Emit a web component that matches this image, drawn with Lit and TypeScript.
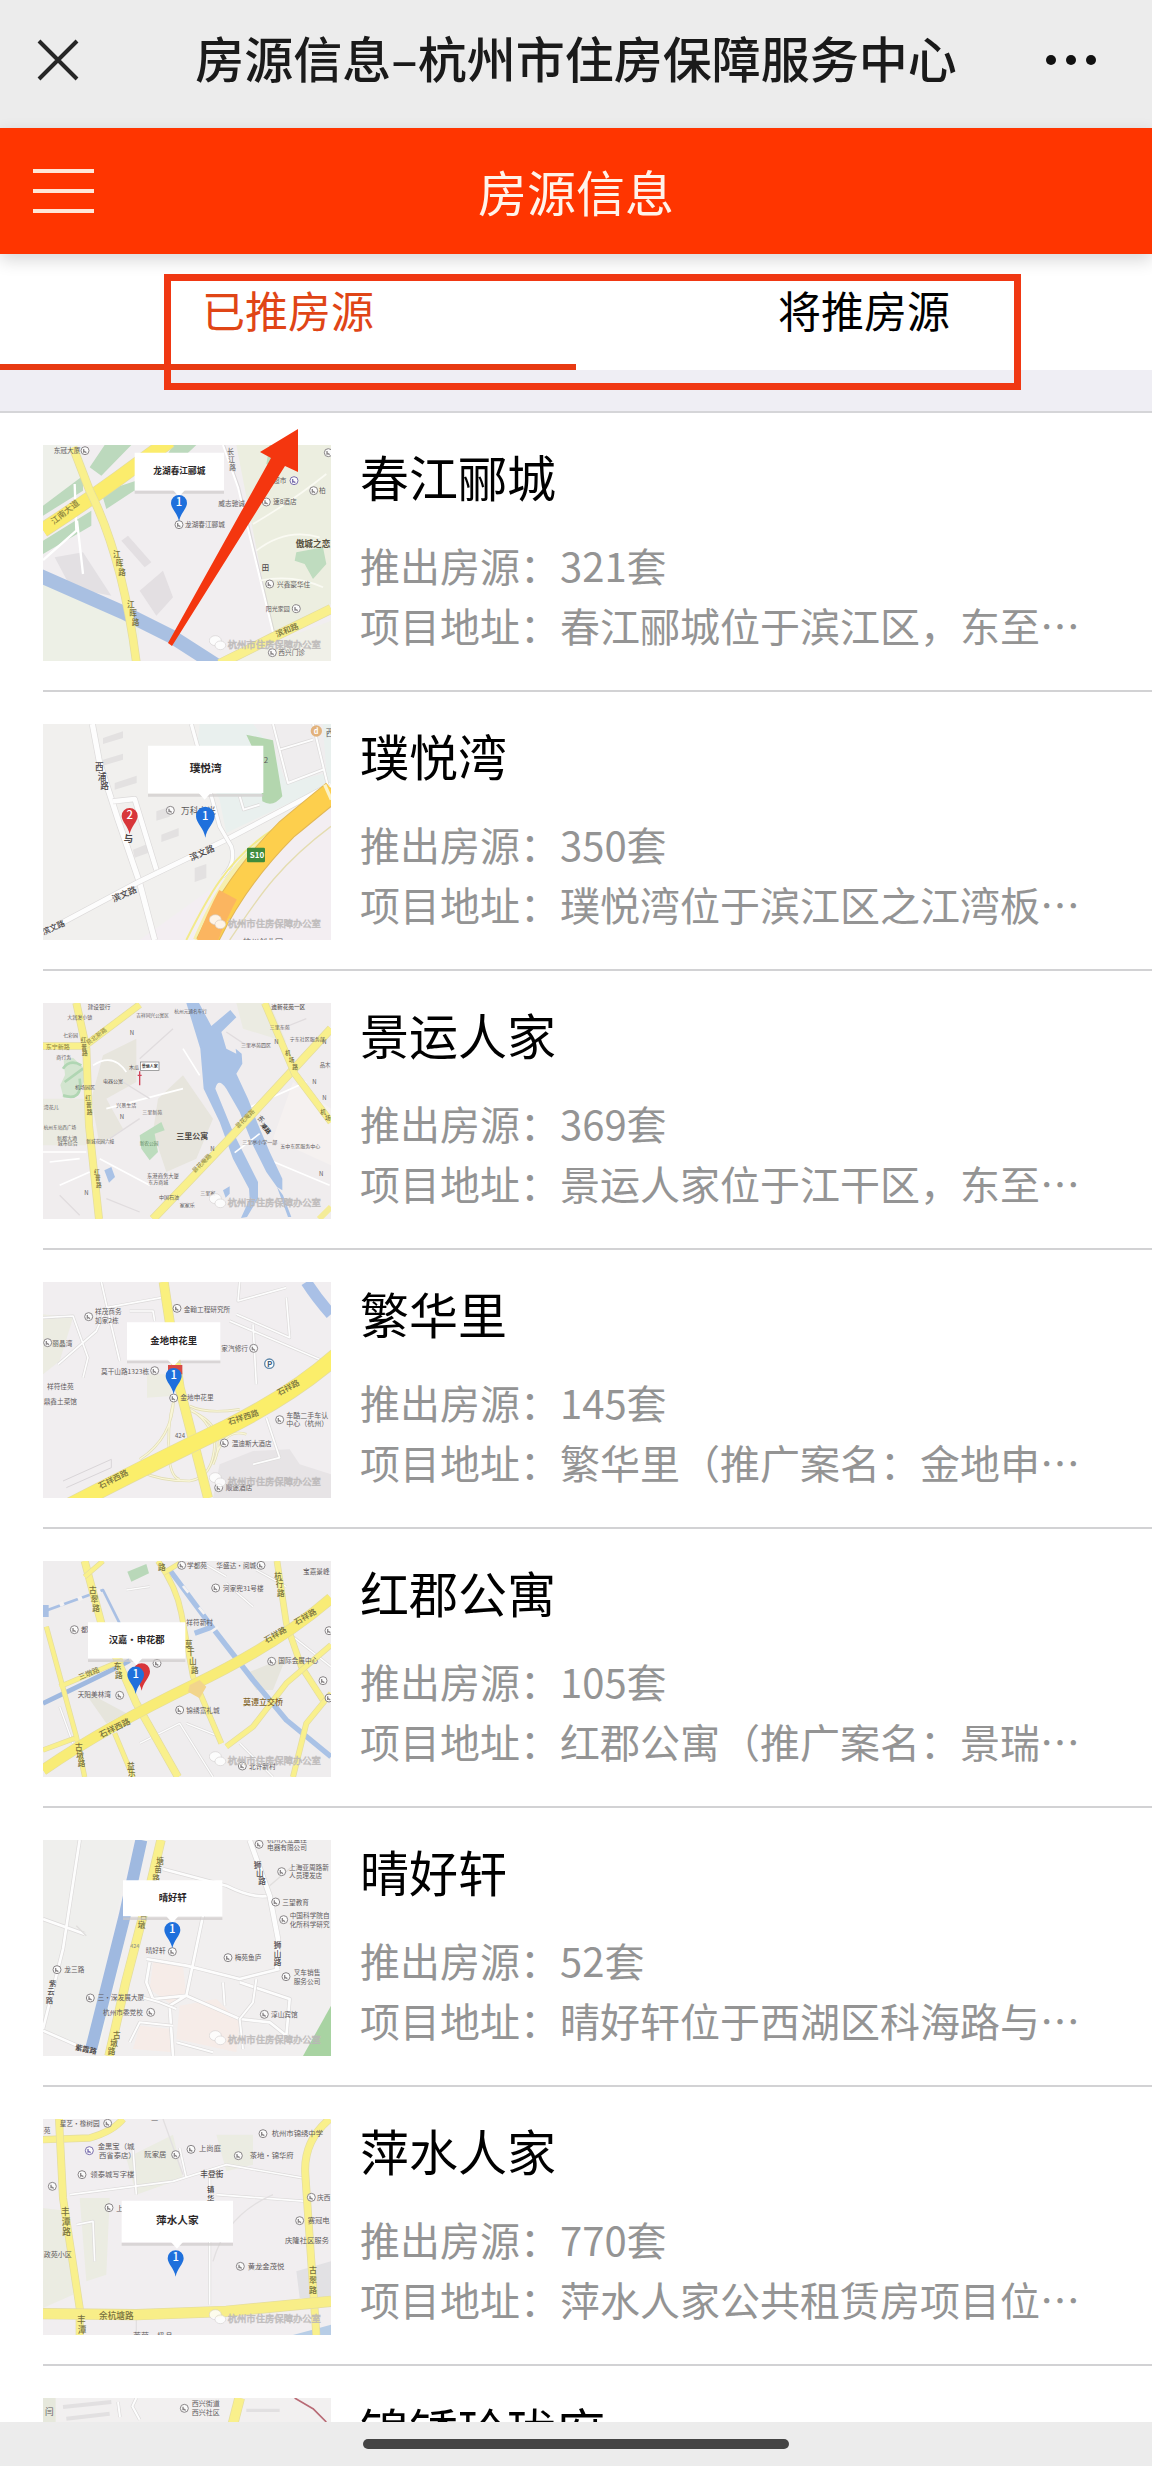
import { LitElement, html, css, svg } from "lit";
import { customElement, property, state } from "lit/decorators.js";
import { classMap } from "lit/directives/class-map.js";

/* ---------- map drawing helpers (map canvas is 864 x 648 units) ---------- */

const line = (d: string, width: number, color: string) =>
  svg`<path d=${d} fill="none" stroke=${color} stroke-width=${width} stroke-linejoin="round"/>`;

const area = (d: string, color: string) => svg`<path d=${d} fill=${color}/>`;

/** Main road: yellow with a darker edge. */
const road = (d: string, width = 26, color = "#f9f08c") =>
  svg`${line(d, width + 4, "#e3dca0")}${line(d, width, color)}`;

/** Side street: white with a grey edge. */
const street = (d: string, width = 8) =>
  svg`${line(d, width + 4, "#dcdada")}${line(d, width, "#fdfdfd")}`;

const label = (x: number, y: number, text: string, size = 23, turn = 0, color = "#5f5b5d", weight = 400) =>
  svg`<text x=${x} y=${y} font-size=${size} fill=${color} font-weight=${weight}
    transform=${`rotate(${turn} ${x} ${y})`}>${text}</text>`;

/** Point of interest: small ringed dot. */
const poi = (x: number, y: number, color = "#8a8688") =>
  svg`<circle cx=${x} cy=${y} r="12" fill="#fbfbfb" stroke=${color} stroke-width="3"/>
    <path d=${`M${x - 4} ${y + 6}V${y - 5}M${x - 4} ${y + 1}l8 5`} fill="none" stroke=${color} stroke-width="4"/>`;

/** Name written down a road, one character per step. */
const along = (x: number, y: number, text: string, dx: number, dy: number, size = 23, color = "#77713f") =>
  [...text].map((c, i) => label(x + dx * i, y + dy * i, c, size, 0, color, 500));

const callout = (x: number, y: number, w: number, h: number, tip: number, text: string, size = 31) => svg`
  <path d=${`M${x} ${y + h + 3}h${w}v8h-${w}z`} fill="#cfcbcb" opacity="0.7"/>
  <path d=${`M${x} ${y}h${w}v${h}H${tip + 18}L${tip} ${y + h + 20}L${tip - 18} ${y + h}H${x}z`} fill="#fff"/>
  <text x=${x + w / 2} y=${y + h / 2 + 8} text-anchor="middle" font-size=${size} font-weight="700" fill="#2b2728">${text}</text>`;

const pin = (x: number, y: number, n: string, color = "#1f70dc", r = 24) => svg`
  <path d=${`M${x} ${y}C${x - 4} ${y - r} ${x - r} ${y - r * 1.6} ${x - r} ${y - r * 2.3}a${r} ${r} 0 0 1 ${r * 2} 0C${x + r} ${y - r * 1.6} ${x + 4} ${y - r} ${x} ${y}z`} fill=${color}/>
  <text x=${x} y=${y - r * 1.9} text-anchor="middle" font-size="34" font-weight="500" fill="#fff">${n}</text>`;

const watermark = () => svg`
  <g opacity="0.85">
    <ellipse cx="527" cy="600" rx="18" ry="15" fill="#fff" stroke="#d2cfcf" stroke-width="2"/>
    <ellipse cx="542" cy="614" rx="16" ry="13" fill="#fff" stroke="#d2cfcf" stroke-width="2"/>
    <text x="564" y="621" font-size="28" fill="#fff" stroke="#b9b6b6" stroke-width="2">杭州市住房保障办公室</text>
  </g>`;

const maps: Record<string, unknown> = {
  chunjiang: svg`
    ${area("M10 13H874V661H10z", "#f1eef0")}
    ${area("M10 13H115L150 110L10 220z", "#eef0ea")}
    ${area("M590 13H874V490L700 580z", "#eceee0")}
    ${area("M10 430L300 560L290 661H10z", "#edf0e6")}
    ${area("M560 661L874 540V661z", "#f0f0e8")}
    ${area("M195 13H275L185 105L150 80zM350 100L400 13H470L420 60L200 205L185 155z", "#bcd9bd")}
    ${area("M10 195L130 105V150L10 225zM10 300L155 210V255L10 340z", "#bcd9bd")}
    ${area("M690 13H720V85L680 70zM770 335L850 320L860 370L820 415L795 370L765 360z", "#bfdcbf")}
    ${area("M45 350L130 335L215 465L160 455L85 425z", "#e3e0e3")}
    ${area("M245 300l20-15l70 80l-20 15zM300 450l70-60l30 80l-50 55z", "#e3dfe2")}
    ${line("M10 358L110 270L105 130M112 240L130 400", 7, "#fff")}
    ${line("M550 13L595 140L700 575", 6, "#fff")}
    ${line("M555 13L600 140L705 575", 2, "#cfcbcd")}
    ${line("M640 250Q760 180 860 100M650 330Q740 260 840 290M660 420Q760 400 850 440", 5, "#fafaf3")}
    ${line("M0 405L250 515L400 590L540 680", 42, "#a9c0e2")}
    ${road("M10 268Q130 190 240 110T390 0", 42, "#fbec6c")}
    ${road("M100 20L150 150Q250 350 290 665", 22)}
    ${road("M540 670L700 590L874 505", 26)}
    ${label(42, 38, "东冠大厦", 20)}${poi(136, 30)}
    ${label(42, 252, "江南大道", 25, -38, "#8b8340", 500)}
    ${along(220, 350, "江晖路", 8, 27)}${along(262, 500, "江晖路", 7, 27)}
    ${along(563, 40, "长江路", 3, 24, 20, "#6e6a6c")}
    ${label(712, 590, "滨和路", 24, -22, "#77713f", 500)}
    ${poi(418, 252)}${label(436, 260, "龙湖春江郦城", 20)}
    ${label(536, 196, "威志驰诚", 20)}${poi(680, 184)}${label(700, 190, "速8酒店", 20)}
    ${label(700, 126, "超市", 20)}${poi(763, 120, "#7b6fae")}${poi(822, 150)}${label(838, 156, "柏", 20)}
    ${label(768, 320, "傲城之恋", 26, 0, "#57503e", 700)}
    ${label(666, 388, "田", 22, 0, "#4c484a", 500)}
    ${poi(690, 430)}${label(712, 438, "兴鑫豪华住", 20)}
    ${label(678, 512, "阳光家园", 18)}${poi(770, 504)}${poi(698, 636)}${label(716, 644, "西兴门诊", 20)}
    ${poi(866, 36)}
    ${callout(285, 36, 268, 112, 418, "龙湖春江郦城", 26)}
    ${pin(418, 242, "1")}
    ${watermark()}`,

  puyue: svg`
    ${area("M10 13H874V661H10z", "#f1f0ee")}
    ${area("M480 13H874V190L560 340L540 240L470 100z", "#e9f0ee")}
    ${area("M640 13H850L860 160L740 190L700 90z", "#efedee")}
    ${area("M300 661L874 250V661z", "#f3eef2")}
    ${area("M620 45L700 62L728 230Q700 265 668 245L660 130z", "#b3d6ae")}
    ${area("M190 55l60-20v20l-60 18zM190 120l60-18v18l-60 18zM225 190l66-22v22l-66 20zM365 345l52-20v24l-52 18zM280 390l45-18v28l-40 14zM350 275l40-14v30l-40 12zM465 445l35-12v42l-35 12z", "#e3e1e1")}
    ${street("M158 13L180 130L235 300L300 490L345 661", 16)}
    ${street("M220 245L285 238L350 450M10 640L300 485L560 360L874 195", 14)}
    ${street("M455 13L540 320L575 380Q590 430 550 470", 10)}
    ${street("M700 13L745 190L850 150M820 13L865 200M720 90L820 60M600 230L612 270L660 255", 6)}
    ${line("M440 661C500 540 560 420 700 330L874 205", 6, "#f2ea8a")}
    ${line("M570 661C640 560 700 450 874 320", 4, "#e4dcb0")}
    ${line("M470 661C530 520 600 400 740 320L874 225", 20, "#f6efae")}
    ${line("M500 670C560 540 650 420 740 330Q800 280 880 215", 66, "#e2b755")}
    ${line("M500 670C560 540 650 420 740 330Q800 280 880 215", 60, "#fdcf4d")}
    ${line("M500 670Q530 590 565 525", 60, "#fbb560")}
    ${line("M855 195l20 45", 10, "#fbf3c8")}
    ${along(166, 152, "西浦路", 8, 28, 26, "#4a4647")}
    ${label(455, 424, "滨文路", 26, -24, "#4a4647", 500)}${label(222, 548, "滨文路", 26, -24, "#4a4647", 500)}${label(12, 646, "滨文路", 24, -24, "#4a4647", 500)}
    ${poi(392, 272)}${label(424, 282, "万科之光", 26, 0, "#5a5657")}
    <rect x="622" y="384" width="54" height="44" rx="4" fill="#3f8c3c"/>
    ${label(630, 415, "S10", 24, 0, "#fff", 700)}
    <circle cx="830" cy="34" r="17" fill="#e2b27c"/>${label(822, 42, "d", 22, 0, "#fff", 700)}${label(858, 50, "西", 26)}
    ${label(672, 130, "2", 24)}
    ${label(252, 366, "与", 28, 0, "#4a4647", 700)}
    ${label(610, 676, "杭州创业园", 24)}
    ${pin(270, 344, "2", "#d8363a")}
    ${callout(325, 78, 346, 142, 495, "璞悦湾", 32)}
    ${pin(497, 354, "1", "#1f70dc", 28)}
    ${watermark()}`,

  jingyun: svg`
    ${area("M10 13H874V661H10z", "#f0edee")}
    ${area("M190 170L290 120V250L200 300L250 390L180 440L155 300zM355 300L430 230L520 360L470 480L380 520L340 400z", "#e7e5dd")}
    ${area("M590 13H690L740 130L610 90zM10 300H140V440H10z", "#ebebe2")}
    ${area("M760 250L874 330V500L700 420z", "#f5f1f0")}
    ${area("M72 185l28-8l32 30l2 40l-22 46l-40 6l-10-40l14-30z", "#d3e5d0")}
    ${line("M70 210Q90 180 125 200M70 290Q130 310 120 240M75 250L130 210", 8, "#b0d6b3")}
    ${area("M300 410L365 370L375 395L345 405L355 460L330 485L305 450z", "#bcdcbd")}
    ${line("M160 200Q220 160 260 220M10 460H140M30 490L120 480M200 330L430 270M180 480L330 560M430 150L480 230M620 330L800 250M60 560L150 520M680 480L870 560", 5, "#fff")}
    ${line("M210 420L300 360M250 250L330 300M400 90L300 180M560 100L620 140M700 100L800 60M60 590L120 650M200 600L300 640", 4, "#e0dcde")}
    ${area("M440 13H478L515 82L572 34L590 56L545 100L560 150L590 165L588 150L606 165L608 195L590 225L625 300L652 370L690 460L728 540V575L712 565L680 520L640 440L600 340L560 270Q535 235 527 270L580 400L620 480L655 550V600L622 655L604 658L630 600L628 570L580 480L540 370L492 270L482 150Z", "#a9c2e6")}
    ${area("M194 515L215 505L226 535L208 552zM550 575l20-12v22l-12 12zM712 565L730 590L755 655H745z", "#a9c2e6")}
    ${line("M585 462L660 405", 5, "#fff")}
    ${road("M110 13L140 150L148 380L178 661", 20)}
    ${road("M10 142L135 142L300 18", 18)}
    ${road("M340 661L560 430L874 90", 22)}
    ${road("M675 13L765 225L874 370", 18)}
    ${line("M838 661L874 625", 18, "#f4ec98")}
    ${label(18, 150, "东宁新路", 18, 0, "#8b8340")}${label(146, 140, "艮北新路", 18, -38, "#8b8340")}
    ${along(123, 130, "红普路", 2, 20, 17)}${along(137, 305, "红普路", 2, 20, 17)}${along(163, 525, "红普路", 3, 20, 17)}
    ${label(465, 524, "昙花庵路", 18, -45, "#8b8340")}${label(595, 390, "昙花庵路", 18, -45, "#8b8340")}
    ${along(736, 170, "机场路", 11, 20, 17)}${along(842, 345, "机场", 14, 20, 17)}
    ${label(652, 360, "东", 20, 40, "#333")}${label(662, 380, "湖路", 18, 50, "#333", 700)}
    ${label(410, 422, "三里公寓", 24, 0, "#514c48", 700)}
    ${label(695, 30, "迪新花苑一区", 17, 0, "#5c5856", 500)}
    ${label(144, 32, "建设银行", 17)}${label(83, 62, "大润发小镇", 15)}${label(70, 115, "七彩园", 15)}${label(50, 182, "商行务", 15)}
    ${label(106, 270, "机场园区", 15)}${label(190, 254, "电器公寓", 15)}${label(230, 325, "兴景生活", 15)}${label(308, 347, "三里新苑", 15)}
    ${label(290, 56, "吉祥同兴公寓区", 14)}${label(404, 42, "杭州元通名车行", 14)}${label(604, 144, "三里亭苑四区", 15)}
    ${label(750, 126, "宁东社区服务部", 15)}${label(690, 90, "三里东苑", 15)}${label(608, 436, "三里亭小学一部", 15)}${label(722, 448, "五中东区服务中心", 15)}
    ${label(322, 538, "东港商务大厦", 16)}${label(326, 556, "东方商城", 15)}${label(358, 602, "中国石油", 15)}${label(420, 624, "家家乐", 15)}
    ${label(482, 588, "三里家", 15)}${label(12, 392, "杭州东站西广场", 14)}${label(52, 424, "新都大酒", 15)}${label(54, 440, "城市综合", 15)}${label(140, 433, "新城花园六幢", 14)}
    ${label(300, 438, "新农公园", 14, 0, "#5e8a5e")}${label(12, 330, "湾花儿", 15)}${label(268, 212, "木瓜", 15)}
    ${label(270, 110, "N", 18)}${label(704, 136, "N", 18)}${label(848, 136, "N", 18)}${label(818, 256, "N", 18)}${label(240, 360, "N", 18)}${label(512, 456, "N", 18)}${label(134, 588, "N", 18)}${label(838, 532, "N", 18)}${label(848, 304, "N", 18)}${label(840, 206, "品木", 16)}
    <rect x="302" y="190" width="56" height="26" fill="#fff" stroke="#777" stroke-width="2"/>
    ${label(306, 208, "景运人家", 12, 0, "#333", 700)}
    ${line("M300 218V260M294 230h12", 4, "#cf4358")}
    ${watermark()}`,

  fanhua: svg`
    ${area("M10 13H874V661H10z", "#f1eef0")}
    ${area("M10 110L100 120L60 250L10 290zM322 290H395V355L322 360z", "#ecece2")}
    ${area("M540 560L640 520L750 515L780 560L874 590V661H520z", "#e7e4e6")}
    ${street("M10 120L100 115L145 240L130 300M55 260L170 160L200 90L365 60M185 13L200 80L240 250M270 100H340L345 130M640 140L650 320M570 130L874 260M740 60L750 180L590 110M600 13L595 70L740 30", 5)}
    ${street("M680 420L720 540L640 560", 5)}
    ${line("M70 610L215 545V570L80 630", 3, "#d9d5d8")}
    ${line("M800 13Q830 60 874 110", 34, "#a9c0e6")}
    ${line("M300 545Q400 480 402 360M390 540Q380 450 402 370M450 385Q500 410 600 395M440 390Q510 420 525 500Q520 600 450 610Q360 610 300 580M455 400Q570 450 520 560M385 510Q390 600 420 605M620 470Q560 450 530 530", 8, "#e0dcb4")}
    ${line("M300 545Q400 480 402 360M390 540Q380 450 402 370M450 385Q500 410 600 395M440 390Q510 420 525 500Q520 600 450 610Q360 610 300 580M455 400Q570 450 520 560M385 510Q390 600 420 605M620 470Q560 450 530 530", 4, "#f9f6d8")}
    ${road("M372 13L420 330L505 661", 26, "#faf07e")}
    ${road("M80 690Q330 560 560 450Q760 350 890 235", 46, "#fbee6a")}
    ${poi(147, 117)}${label(166, 110, "祥茂商务", 20)}${label(166, 136, "如家2栋", 20)}
    ${poi(412, 92)}${label(432, 102, "金翰工程研究所", 20)}
    ${poi(24, 195)}${label(38, 204, "丽晶湾", 20)}
    ${label(184, 288, "莫干山路1323栋", 20)}${poi(345, 279)}
    ${label(545, 220, "家汽修行", 20)}${poi(642, 212)}
    <circle cx="689" cy="258" r="14" fill="#fff" stroke="#5f86a8" stroke-width="4"/>${label(682, 267, "P", 24, 0, "#41617e", 700)}
    ${label(22, 334, "祥符佳苑", 20)}${label(12, 380, "鼎鑫土菜馆", 20)}
    ${poi(402, 361)}${label(422, 366, "金地申花里", 20)}
    ${label(568, 442, "石祥西路", 24, -18, "#77713f", 500)}${label(718, 354, "石祥路", 24, -28, "#77713f", 500)}${label(182, 634, "石祥西路", 24, -27, "#77713f", 500)}
    ${label(406, 482, "424", 18)}
    ${poi(720, 426)}${label(740, 420, "车酷二手车认", 21)}${label(740, 446, "中心（杭州）", 21)}
    ${poi(554, 496)}${label(576, 504, "温迪斯大酒店", 20)}
    ${poi(537, 630)}${label(558, 636, "顺途酒店", 20)}
    ${callout(262, 134, 280, 112, 402, "金地申花里", 28)}
    ${area("M385 262H428V290H385z", "#d94a44")}
    ${pin(402, 350, "1")}
    ${watermark()}`,

  hongjun: svg`
    ${area("M10 13H874V661H10z", "#efedee")}
    ${area("M130 400L260 470L200 500zM620 350L740 300L700 400L650 400z", "#e6e5dc")}
    ${area("M263 45L320 22L328 50L275 75z", "#b9d8b9")}
    ${street("M300 560L420 500L520 661M440 500L540 540M560 80L640 150M650 40L740 90M760 240L874 330M60 450L100 560M480 13L560 60M260 100L330 90M600 560L700 661", 4)}
    ${line("M10 165L190 100L240 200", 8, "#a9c0e4")}
    ${line("M18 145v36", 18, "#a9c0e4")}
    ${line("M60 145l12-6M115 128l12-6M170 108l12-6", 14, "#f4f2f2")}
    ${line("M10 440Q200 350 270 312", 14, "#9fb9e0")}
    ${line("M390 40L520 215L640 370L740 490L874 600M465 230L515 212", 16, "#a9c2e6")}
    ${line("M430 88l16 20M478 152l16 20M515 225l20-14", 8, "#f4f2f2")}
    ${road("M135 13L185 200L290 440L415 661", 20)}
    ${road("M355 13Q410 90 425 170L460 360L545 560", 14)}
    ${road("M712 13L740 200L785 330L850 430", 16)}
    ${road("M60 390L250 310M20 210L110 540L135 661M10 580L105 545M225 530L280 661M370 50L420 20M135 60L190 13", 12)}
    ${road("M560 570L640 510L740 380L874 265M760 661L800 500L874 410", 14)}
    ${road("M10 640Q200 510 460 385T874 125", 30, "#f8ec76")}
    ${area("M450 385L480 370L500 390L480 425L445 405z", "#f2d58c")}
    ${along(148, 110, "古翠路", 5, 27)}${along(355, 40, "路", 0, 24)}
    ${along(704, 66, "杭行路", 4, 26)}${along(436, 270, "莫干山路", 6, 26)}${along(222, 338, "东路", 4, 25)}${along(106, 580, "古墩路", 4, 24)}${along(262, 636, "益乐", 3, 22)}
    ${label(120, 370, "三墩路", 22, -22, "#77713f")}
    ${label(184, 544, "石祥西路", 25, -26, "#77713f", 500)}${label(680, 260, "石祥路", 24, -30, "#77713f", 500)}${label(770, 206, "石祥路", 24, -30, "#77713f", 500)}
    ${poi(426, 26)}${label(442, 33, "学都苑", 20)}${label(530, 34, "华盛达·阅城", 20)}${poi(664, 26)}
    ${poi(528, 94)}${label(550, 102, "河家兜31号楼", 20)}${label(790, 52, "宝嘉景峰", 20)}
    ${label(440, 206, "祥符新村", 20)}${poi(104, 219)}${label(124, 226, "都", 22)}
    ${poi(696, 314)}${label(716, 320, "国际会展中心", 20)}${poi(850, 372)}${poi(868, 222)}${poi(868, 424)}
    ${label(610, 445, "莫谭立交桥", 24, 0, "#806228", 500)}
    ${label(114, 420, "天阳美林湾", 20)}${poi(240, 416)}
    ${poi(420, 460)}${label(440, 470, "锦绣富礼城", 20)}${poi(352, 320)}
    ${poi(608, 628)}${label(628, 636, "北许新村", 20)}
    ${pin(306, 402, "", "#d8363a", 25)}
    ${callout(145, 197, 292, 108, 290, "汉嘉·申花郡", 28)}
    ${pin(288, 412, "1", "#1f70dc", 25)}
    ${watermark()}`,

  qinghao: svg`
    ${area("M10 13H874V661H10z", "#f1efef")}
    ${area("M10 13H280L140 640L10 580z", "#efefed")}
    ${area("M340 380L430 390L440 480L400 510L330 460zM420 510L530 490L600 560L590 650L410 610zM300 570L395 580L400 650L280 640z", "#f6ece8")}
    ${area("M874 510L790 661H874z", "#a8d3a2")}
    ${area("M308 13H325L180 640H165z", "#f3f3ef")}
    ${street("M120 13L70 340L10 580M10 250L135 295M10 585L170 655M370 100L560 150Q640 190 690 180M320 370L440 390L600 430L720 400M490 240L440 480L390 510L400 661M330 380L320 440L340 490L440 480L600 550L690 560L740 600L750 490L600 440", 8)}
    ${street("M290 480L360 500L410 520M410 620L520 650M550 440L555 510M650 430L640 500L600 550L610 640M400 570L300 560L270 620", 6)}
    ${street("M630 13L690 180L715 310L712 400", 14)}
    ${line("M690 150L760 90M110 270L140 300", 4, "#e0dedd")}
    ${line("M305 13L255 240L155 638", 36, "#9fb9e0")}
    ${road("M364 13L310 240L258 440L208 661", 24)}
    ${along(350, 84, "塘苗路", -6, 26)}${along(300, 250, "古墩", -6, 26)}${along(220, 606, "古墩路", -8, 24)}
    ${label(272, 336, "424", 16, 0, "#888")}
    ${along(642, 96, "狮山路", 7, 25, 23, "#4e4a4b")}${along(702, 338, "狮山路", 0, 25, 23, "#4e4a4b")}${along(28, 450, "紫云路", -5, 26, 22, "#4e4a4b")}
    ${label(105, 642, "紫霞路", 22, 12, "#4e4a4b", 700)}
    ${poi(658, 26)}${label(682, 20, "杭州大立监控", 20)}${label(682, 44, "电器有限公司", 20)}
    ${poi(726, 108)}${label(748, 102, "上海亚周路新", 20)}${label(748, 127, "人员理发店", 20)}
    ${poi(708, 199)}${label(728, 207, "三望教育", 20)}
    ${poi(732, 252)}${label(750, 247, "中国科学院自", 20)}${label(750, 273, "化所科学研究", 20)}
    ${poi(565, 366)}${label(585, 373, "梅苑鱼庐", 20)}
    ${poi(739, 423)}${label(762, 418, "叉车销售", 20)}${label(762, 445, "服务公司", 20)}
    ${poi(52, 402)}${label(74, 410, "龙三路", 20)}
    ${poi(152, 487)}${label(174, 493, "三·深发展大厦", 20)}
    ${label(190, 537, "杭州市委党校", 20)}${poi(333, 530)}
    ${poi(674, 536)}${label(694, 543, "淳山宾馆", 20)}
    ${label(318, 352, "晴好轩", 20)}${poi(398, 348)}
    ${callout(250, 134, 298, 108, 398, "晴好轩", 28)}
    ${pin(398, 338, "1")}
    ${watermark()}`,

  pingshui: svg`
    ${area("M10 13H874V661H10z", "#f1eef0")}
    ${area("M10 280L90 290L100 540L10 580zM260 130L400 60L430 190L290 240zM530 60H640V150L560 170zM120 250L210 250L200 480L140 500z", "#ebece2")}
    ${area("M770 470L874 440V550H780z", "#e2e1e4")}
    ${area("M760 661L874 630V661z", "#b7cde6")}
    ${street("M510 180V570M90 240L400 200L560 150L790 190M280 100L290 240M110 330L160 320L165 440M530 240L800 260M420 100L440 190", 5)}
    ${line("M520 440Q560 300 700 240M290 600V661M370 13L430 180", 4, "#e2dfe0")}
    ${road("M10 75L150 70Q220 50 250 13", 18)}
    ${road("M58 13L70 250L120 580V661", 20)}
    ${road("M870 13Q790 80 797 180L830 661", 20)}
    ${road("M10 597L290 600L560 590L874 560", 30, "#f8ee88")}
    ${label(60, 33, "星艺·橡树园", 20)}${poi(204, 26)}${label(12, 54, "苑", 20)}
    ${poi(149, 108, "#7b6fae")}${label(174, 102, "金黑宝（城", 22)}${label(178, 130, "西省泰店）", 22)}
    ${label(314, 127, "阮家居", 22)}${poi(408, 120)}${poi(454, 104)}${label(478, 110, "上尚庭", 22)}
    ${poi(670, 57)}${label(696, 65, "杭州市锦绣中学", 22)}
    ${poi(596, 123)}${label(630, 131, "茶地·锦华府", 22)}
    ${poi(127, 180)}${label(152, 188, "领泰城写字楼", 22)}
    ${label(482, 187, "丰登街", 23, 0, "#4e4a4b", 500)}${along(502, 232, "镇华", 0, 26, 22, "#3e3a3b")}
    ${poi(38, 215)}${poi(208, 279)}${label(230, 288, "上", 22)}
    ${poi(815, 248)}${label(832, 256, "庆西", 20)}${poi(780, 318)}${label(804, 326, "赛冠电", 22)}
    ${label(736, 386, "庆隆社区服务", 22)}${label(12, 427, "政苑小区", 21)}
    ${poi(602, 455)}${label(624, 463, "黄龙金茂悦", 22)}
    ${along(64, 300, "丰潭路", 2, 30, 26)}${along(808, 474, "古翠路", 0, 30, 24)}${along(112, 626, "丰潭", 2, 28, 26)}
    ${label(178, 613, "余杭塘路", 26, 0, "#77713f", 500)}${label(280, 672, "莱茵·极品", 24)}${label(334, 16, "三", 22)}
    ${callout(246, 258, 334, 124, 412, "萍水人家", 32)}
    ${pin(408, 486, "1")}
    ${watermark()}`,

  jinxiu: svg`
    ${area("M10 13H874V661H10z", "#f2f0f0")}
    ${area("M10 13H48V240H10z", "#e6e8dc")}
    ${line("M70 40L215 25M80 75L210 60", 12, "#e2e0e1")}
    ${street("M235 25l6 45M290 13l-12 25l22 40", 6)}
    ${line("M620 50H720", 10, "#e2e0e1")}
    ${road("M600 13L575 110", 28)}
    ${line("M765 13L820 45L860 85", 5, "#b86a75")}
    ${label(16, 64, "闫", 26)}${poi(434, 44)}${label(456, 38, "西兴街道", 21)}${label(456, 64, "西兴社区", 21)}`,
};

/* ---------- elements ---------- */

@customElement("location-map")
class LocationMap extends LitElement {
  @property() name = "";
  @property() caption = "";

  static styles = css`
    :host {
      display: block;
      aspect-ratio: 4 / 3;
    }
    .map {
      display: block;
      width: 100%;
      height: 100%;
      font-family: "Noto Sans CJK SC", sans-serif;
    }
  `;

  render() {
    return html`<svg class="map" viewBox="10 13 864 648" role="img" aria-label=${this.caption} lang="zh-CN">
      ${maps[this.name]}
    </svg>`;
  }
}

interface Estate {
  map: string;
  name: string;
  count: number;
  address: string;
}

const estates: Estate[] = [
  { map: "chunjiang", name: "春江郦城", count: 321, address: "春江郦城位于滨江区，东至…" },
  { map: "puyue", name: "璞悦湾", count: 350, address: "璞悦湾位于滨江区之江湾板…" },
  { map: "jingyun", name: "景运人家", count: 369, address: "景运人家位于江干区，东至…" },
  { map: "fanhua", name: "繁华里", count: 145, address: "繁华里（推广案名：金地申…" },
  { map: "hongjun", name: "红郡公寓", count: 105, address: "红郡公寓（推广案名：景瑞…" },
  { map: "qinghao", name: "晴好轩", count: 52, address: "晴好轩位于西湖区科海路与…" },
  { map: "pingshui", name: "萍水人家", count: 770, address: "萍水人家公共租赁房项目位…" },
  { map: "jinxiu", name: "锦锈玲珑府", count: 0, address: "" },
];

@customElement("app-root")
class AppRoot extends LitElement {
  @state() private tab = 0;

  static styles = css`
    :host {
      display: flex;
      flex-direction: column;
      position: relative;
      height: 100vh;
      overflow: hidden;
      background: #fff;
      color: #000;
      font-family: "Noto Sans CJK SC", sans-serif;
    }
    * {
      box-sizing: border-box;
    }
    button {
      margin: 0;
      padding: 0;
      border: 0;
      background: none;
      color: inherit;
      font: inherit;
      cursor: pointer;
    }
    svg {
      display: block;
    }
    h1,
    h2,
    h3,
    p,
    ul {
      margin: 0;
      padding: 0;
      font-weight: 400;
      list-style: none;
    }
    .window-bar,
    .page-bar {
      flex: none;
      display: grid;
      grid-template-columns: 120px 1fr 120px;
      align-items: center;
      text-align: center;
    }
    .window-bar {
      height: 128px;
      padding-bottom: 8px;
      background: #ececec;
      color: #1a1a1a;
    }
    .window-title {
      padding-bottom: 6px;
      font-size: 49px;
      line-height: 64px;
      font-weight: 500;
      white-space: nowrap;
    }
    .close {
      justify-self: start;
      padding-left: 37px;
    }
    .more {
      justify-self: end;
      padding-right: 54px;
    }
    .page-bar {
      position: relative;
      height: 126px;
      background: #ff3500;
      color: #fff3ea;
      box-shadow: 0 6px 16px rgba(0, 0, 0, 0.16);
    }
    .page-title {
      font-size: 49px;
      line-height: 64px;
    }
    .menu {
      justify-self: start;
      padding-left: 33px;
    }
    .tabs {
      flex: none;
      display: grid;
      grid-template-columns: 1fr 1fr;
      height: 116px;
    }
    .tab {
      border-bottom: 6px solid transparent;
      font-size: 43px;
      line-height: 60px;
    }
    .tab.active {
      border-bottom-color: #e83a12;
      color: #e04516;
    }
    .gap {
      flex: none;
      height: 43px;
      background: #efeef4;
      border-bottom: 2px solid #d5d5d8;
    }
    .list {
      flex: 1;
      min-height: 0;
      overflow-y: auto;
      scrollbar-width: none;
      padding-left: 43px;
    }
    .item {
      border-bottom: 2px solid #d2d2d4;
    }
    .link {
      display: grid;
      grid-template-columns: 288px minmax(0, 1fr);
      column-gap: 29px;
      padding: 32px 32px 29px 0;
      color: inherit;
      text-decoration: none;
    }
    .name {
      margin-bottom: 28px;
      font-size: 49px;
      line-height: 62px;
    }
    .detail {
      color: #949494;
      font-size: 40px;
      line-height: 60px;
      overflow: hidden;
      white-space: nowrap;
      text-overflow: ellipsis;
    }
    .home-bar {
      flex: none;
      display: flex;
      align-items: center;
      justify-content: center;
      height: 44px;
      background: #ececec;
    }
    .handle {
      width: 37%;
      height: 10px;
      border-radius: 5px;
      background: #444;
    }
    .mark-box {
      position: absolute;
      left: 164px;
      right: 131px;
      top: 274px;
      height: 116px;
      border: 7px solid #f03813;
      pointer-events: none;
    }
    .mark-arrow {
      position: absolute;
      left: 164px;
      top: 426px;
      pointer-events: none;
    }
  `;

  render() {
    return html`
      <header class="window-bar" lang="zh-CN">
        <button class="close" aria-label="关闭">
          <svg width="42" height="42" viewBox="0 0 42 42">
            <path d="M2 2L40 40M40 2L2 40" stroke="#262626" stroke-width="4" />
          </svg>
        </button>
        <h1 class="window-title">房源信息–杭州市住房保障服务中心</h1>
        <button class="more" aria-label="更多">
          <svg width="54" height="14" viewBox="0 0 54 14">
            <circle cx="7" cy="7" r="5" fill="#111" />
            <circle cx="27" cy="7" r="5" fill="#111" />
            <circle cx="47" cy="7" r="5" fill="#111" />
          </svg>
        </button>
      </header>
      <div class="page-bar" lang="zh-CN">
        <button class="menu" aria-label="菜单">
          <svg width="61" height="46" viewBox="0 0 61 46">
            <path d="M0 3H61M0 23H61M0 43H61" stroke="#ffe6d8" stroke-width="4" />
          </svg>
        </button>
        <h2 class="page-title">房源信息</h2>
      </div>
      <nav class="tabs" role="tablist" lang="zh-CN">
        ${["已推房源", "将推房源"].map(
          (t, i) => html`<button
            role="tab"
            aria-selected=${this.tab === i}
            class=${classMap({ tab: true, active: this.tab === i })}
            @click=${() => (this.tab = i)}
          >${t}</button>`
        )}
      </nav>
      <div class="gap"></div>
      <ul class="list" lang="zh-CN">
        ${estates.map(
          (e) => html`<li class="item">
            <a class="link" href="#${e.map}">
              <location-map name=${e.map} caption=${e.name}></location-map>
              <div>
                <h3 class="name">${e.name}</h3>
                ${e.count
                  ? html`<p class="detail">推出房源：${e.count}套</p>
                      <p class="detail">项目地址：${e.address}</p>`
                  : null}
              </div>
            </a>
          </li>`
        )}
      </ul>
      <footer class="home-bar"><div class="handle"></div></footer>
      <div class="mark-box"></div>
      <svg class="mark-arrow" width="138" height="224" viewBox="164 426 138 224">
        <path d="M298 429L298 472L285 466L172 646L168 643L271 458L260 452Z" fill="#f4360f" />
      </svg>
    `;
  }
}
